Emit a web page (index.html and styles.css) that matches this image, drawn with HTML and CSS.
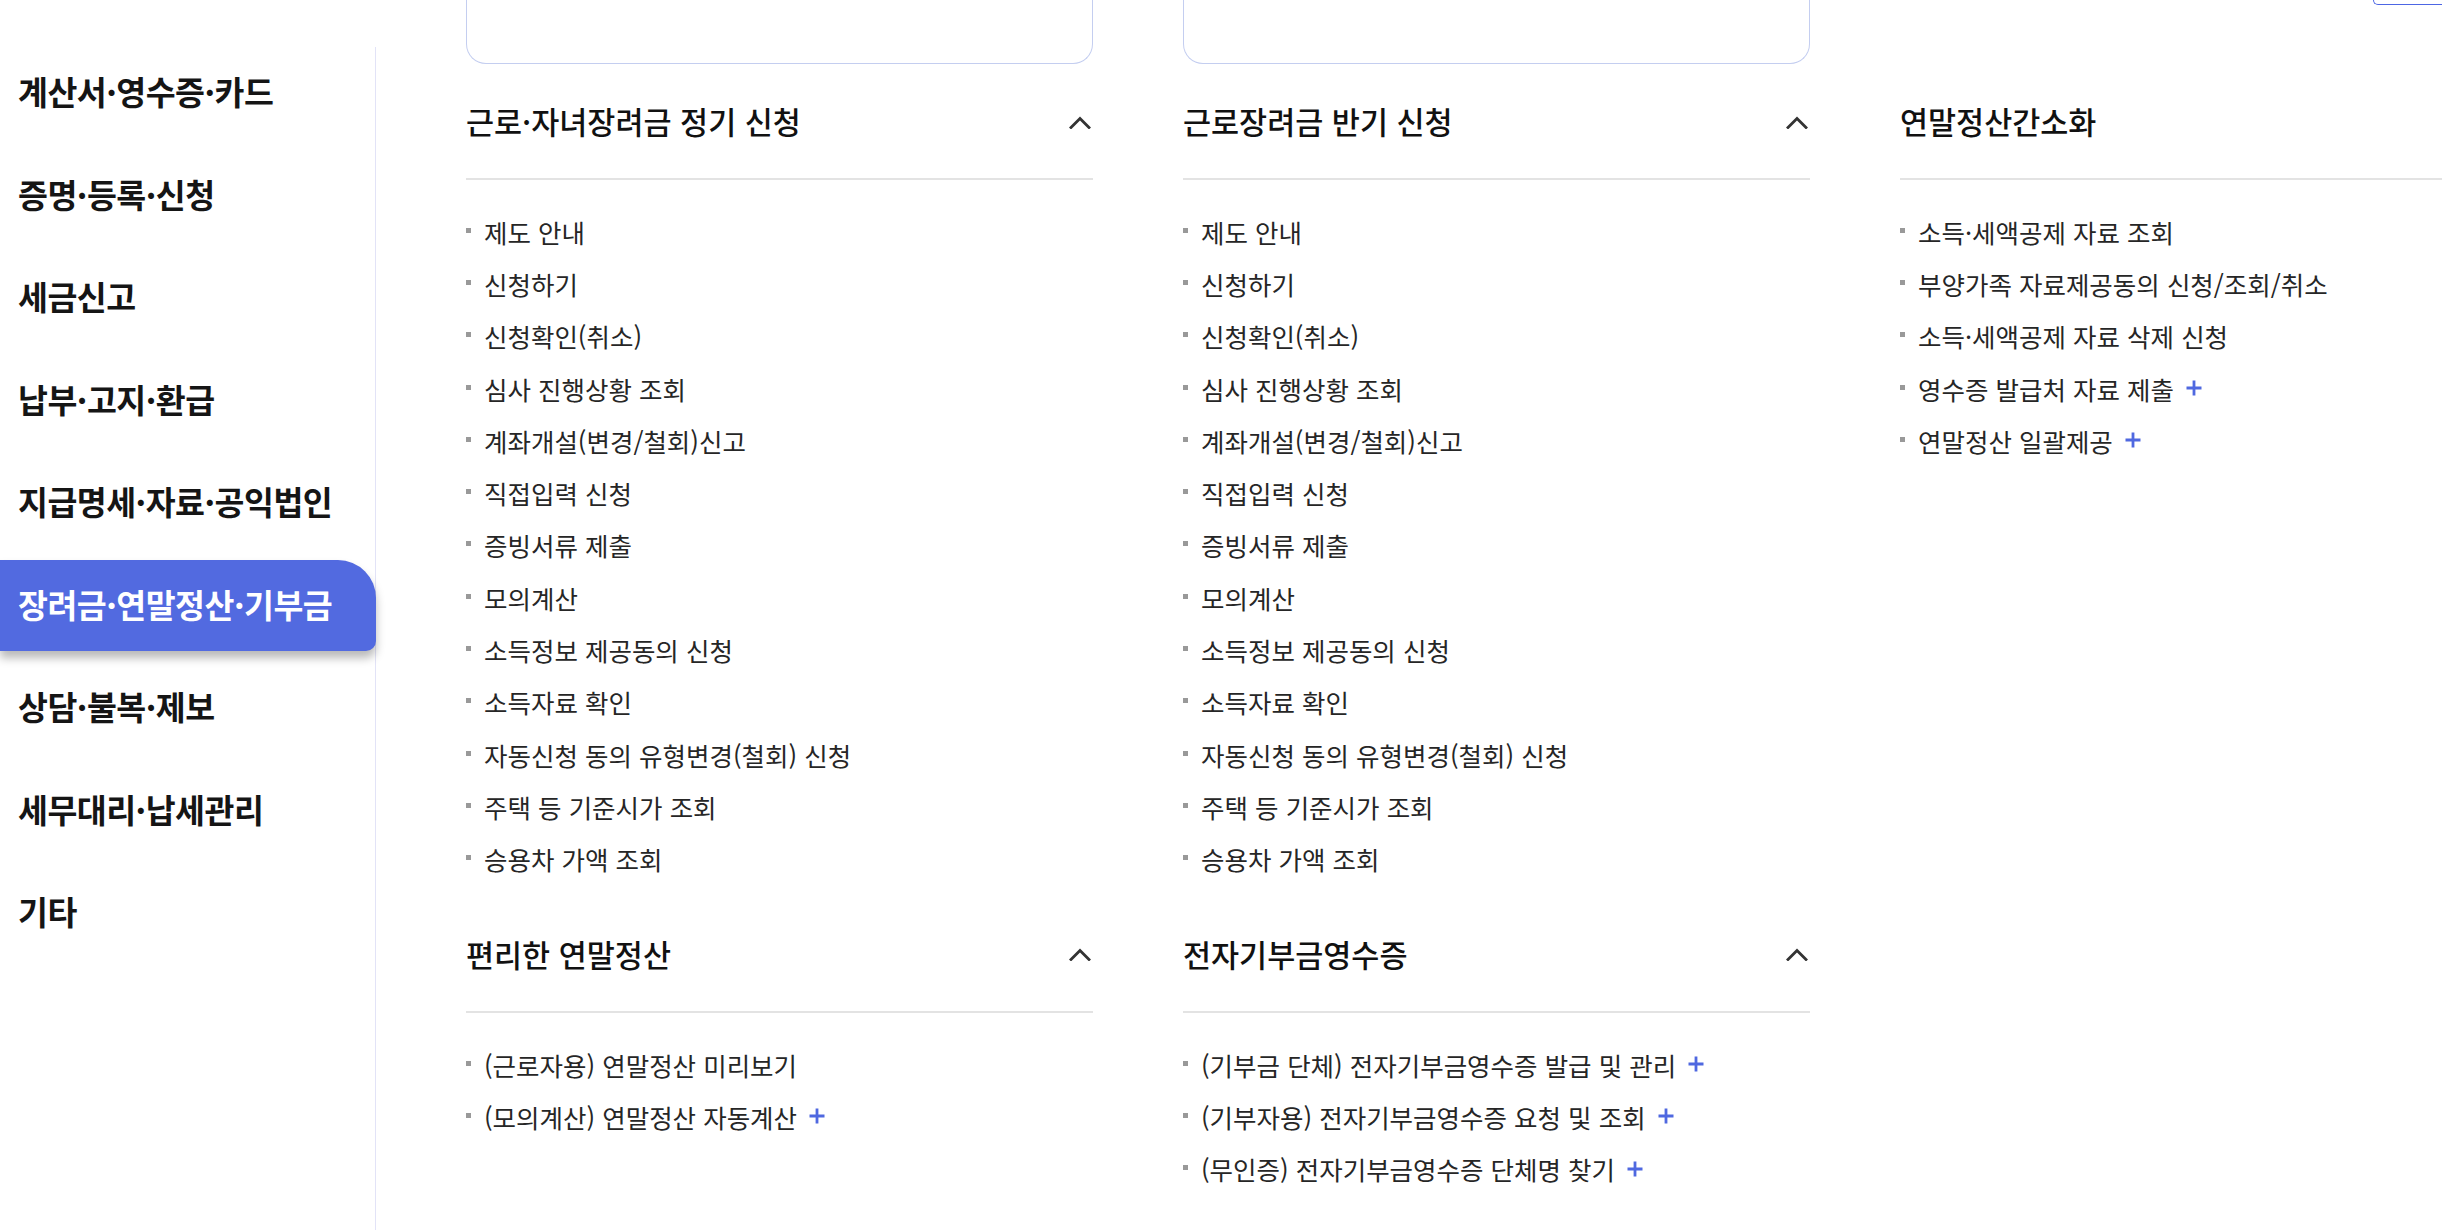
FILE: index.html
```html
<!DOCTYPE html>
<html lang="ko">
<head>
<meta charset="utf-8">
<title>장려금·연말정산·기부금</title>
<link rel="stylesheet" href="styles.css">
</head>
<body>
<div class="page">
  <aside class="side">
    <ul class="gnb">
      <li class="gnb-item">계산서·영수증·카드</li>
      <li class="gnb-item">증명·등록·신청</li>
      <li class="gnb-item">세금신고</li>
      <li class="gnb-item">납부·고지·환급</li>
      <li class="gnb-item">지급명세·자료·공익법인</li>
      <li class="gnb-item is-active">장려금·연말정산·기부금</li>
      <li class="gnb-item">상담·불복·제보</li>
      <li class="gnb-item">세무대리·납세관리</li>
      <li class="gnb-item">기타</li>
    </ul>
  </aside>
  <main class="main">
    <div class="cols">
      <div class="col">
        <div class="col-top"><div class="card"></div></div>
        <section class="sec">
          <div class="sec-head"><h3 class="sec-title">근로·자녀장려금 정기 신청</h3><svg class="chev" width="22" height="13" viewBox="0 0 22 13"><polyline points="2,11.5 11,2.5 20,11.5" fill="none" stroke="#333" stroke-width="2.8" stroke-linecap="square"/></svg></div>
          <ul class="links">
            <li>제도 안내</li>
            <li>신청하기</li>
            <li>신청확인(취소)</li>
            <li>심사 진행상황 조회</li>
            <li>계좌개설(변경/철회)신고</li>
            <li>직접입력 신청</li>
            <li>증빙서류 제출</li>
            <li>모의계산</li>
            <li>소득정보 제공동의 신청</li>
            <li>소득자료 확인</li>
            <li>자동신청 동의 유형변경(철회) 신청</li>
            <li>주택 등 기준시가 조회</li>
            <li>승용차 가액 조회</li>
          </ul>
        </section>
        <section class="sec sec-next">
          <div class="sec-head"><h3 class="sec-title">편리한 연말정산</h3><svg class="chev" width="22" height="13" viewBox="0 0 22 13"><polyline points="2,11.5 11,2.5 20,11.5" fill="none" stroke="#333" stroke-width="2.8" stroke-linecap="square"/></svg></div>
          <ul class="links">
            <li>(근로자용) 연말정산 미리보기</li>
            <li>(모의계산) 연말정산 자동계산<svg class="plus" width="16" height="16" viewBox="0 0 16 16"><path d="M8 0.5v15M0.5 8h15" stroke="#4f68e0" stroke-width="2.8"/></svg></li>
          </ul>
        </section>
      </div>
      <div class="col">
        <div class="col-top"><div class="card"></div></div>
        <section class="sec">
          <div class="sec-head"><h3 class="sec-title">근로장려금 반기 신청</h3><svg class="chev" width="22" height="13" viewBox="0 0 22 13"><polyline points="2,11.5 11,2.5 20,11.5" fill="none" stroke="#333" stroke-width="2.8" stroke-linecap="square"/></svg></div>
          <ul class="links">
            <li>제도 안내</li>
            <li>신청하기</li>
            <li>신청확인(취소)</li>
            <li>심사 진행상황 조회</li>
            <li>계좌개설(변경/철회)신고</li>
            <li>직접입력 신청</li>
            <li>증빙서류 제출</li>
            <li>모의계산</li>
            <li>소득정보 제공동의 신청</li>
            <li>소득자료 확인</li>
            <li>자동신청 동의 유형변경(철회) 신청</li>
            <li>주택 등 기준시가 조회</li>
            <li>승용차 가액 조회</li>
          </ul>
        </section>
        <section class="sec sec-next">
          <div class="sec-head"><h3 class="sec-title">전자기부금영수증</h3><svg class="chev" width="22" height="13" viewBox="0 0 22 13"><polyline points="2,11.5 11,2.5 20,11.5" fill="none" stroke="#333" stroke-width="2.8" stroke-linecap="square"/></svg></div>
          <ul class="links">
            <li>(기부금 단체) 전자기부금영수증 발급 및 관리<svg class="plus" width="16" height="16" viewBox="0 0 16 16"><path d="M8 0.5v15M0.5 8h15" stroke="#4f68e0" stroke-width="2.8"/></svg></li>
            <li>(기부자용) 전자기부금영수증 요청 및 조회<svg class="plus" width="16" height="16" viewBox="0 0 16 16"><path d="M8 0.5v15M0.5 8h15" stroke="#4f68e0" stroke-width="2.8"/></svg></li>
            <li>(무인증) 전자기부금영수증 단체명 찾기<svg class="plus" width="16" height="16" viewBox="0 0 16 16"><path d="M8 0.5v15M0.5 8h15" stroke="#4f68e0" stroke-width="2.8"/></svg></li>
          </ul>
        </section>
      </div>
      <div class="col">
        <div class="col-top"><div class="tab-edge"></div></div>
        <section class="sec">
          <div class="sec-head"><h3 class="sec-title">연말정산간소화</h3></div>
          <ul class="links">
            <li>소득·세액공제 자료 조회</li>
            <li>부양가족 자료제공동의 신청/조회/취소</li>
            <li>소득·세액공제 자료 삭제 신청</li>
            <li>영수증 발급처 자료 제출<svg class="plus" width="16" height="16" viewBox="0 0 16 16"><path d="M8 0.5v15M0.5 8h15" stroke="#4f68e0" stroke-width="2.8"/></svg></li>
            <li>연말정산 일괄제공<svg class="plus" width="16" height="16" viewBox="0 0 16 16"><path d="M8 0.5v15M0.5 8h15" stroke="#4f68e0" stroke-width="2.8"/></svg></li>
          </ul>
        </section>
      </div>
    </div>
  </main>
</div>
</body>
</html>
```

FILE: styles.css
```css
* { box-sizing: border-box; }
html, body { margin: 0; padding: 0; }
body {
  width: 2442px;
  height: 1230px;
  overflow: hidden;
  background: #fff;
  font-family: "Noto Sans CJK KR", "Noto Sans", sans-serif;
  color: #222;
}
ul { list-style: none; margin: 0; padding: 0; }
h3 { margin: 0; }

.page {
  display: flex;
  min-height: 1230px;
}

/* sidebar */
.side {
  flex: 0 0 376px;
  margin-top: 47px;
  border-right: 1px solid #e2e3f7;
}
.gnb-item {
  height: 91px;
  margin-bottom: 11.5px;
  margin-right: -1px;
  padding-left: 18px;
  padding-bottom: 4px;
  display: flex;
  align-items: center;
  font-size: 32.5px;
  font-weight: 700;
  letter-spacing: -0.5px;
  color: #151515;
  white-space: nowrap;
}
.gnb-item.is-active {
  background: #526ae0;
  color: #fff;
  border-radius: 0 38px 10px 0;
  box-shadow: 0 7px 10px rgba(0, 0, 0, 0.28);
  position: relative;
}

/* main area */
.main {
  flex: 1 1 auto;
  padding-left: 90px;
}
.cols {
  display: grid;
  grid-template-columns: 627px 627px 627px;
  column-gap: 90px;
}
.col-top {
  height: 64px;
}
.card {
  height: 64px;
  border: 1.5px solid #c4cef0;
  border-top: 0;
  border-radius: 0 0 20px 20px;
}
.tab-edge {
  margin-left: 473px;
  height: 5px;
  border: 1.5px solid #4d66e4;
  border-top: 0;
  border-right: 0;
  border-radius: 0 0 0 8px;
}

.sec { margin-top: 30px; }
.sec-next { margin-top: 42px; }
.sec-head {
  display: flex;
  align-items: center;
  justify-content: space-between;
  height: 54px;
  box-sizing: content-box;
  padding-bottom: 30px;
  border-bottom: 2px solid #e3e3e3;
}
.sec-title {
  font-size: 30.5px;
  font-weight: 500;
  color: #111;
}
.chev { margin-right: 2px; margin-top: 2px; }

.links { padding-top: 25px; }
.links li {
  display: flex;
  align-items: center;
  height: 52.3px;
  font-size: 25.5px;
  color: #262626;
  white-space: nowrap;
}
.links li::before {
  content: "";
  flex: 0 0 5px;
  width: 5px;
  height: 5px;
  margin-right: 13px;
  margin-top: -2px;
  background: #999;
}
.plus { margin-left: 12px; flex: 0 0 16px; }
```
